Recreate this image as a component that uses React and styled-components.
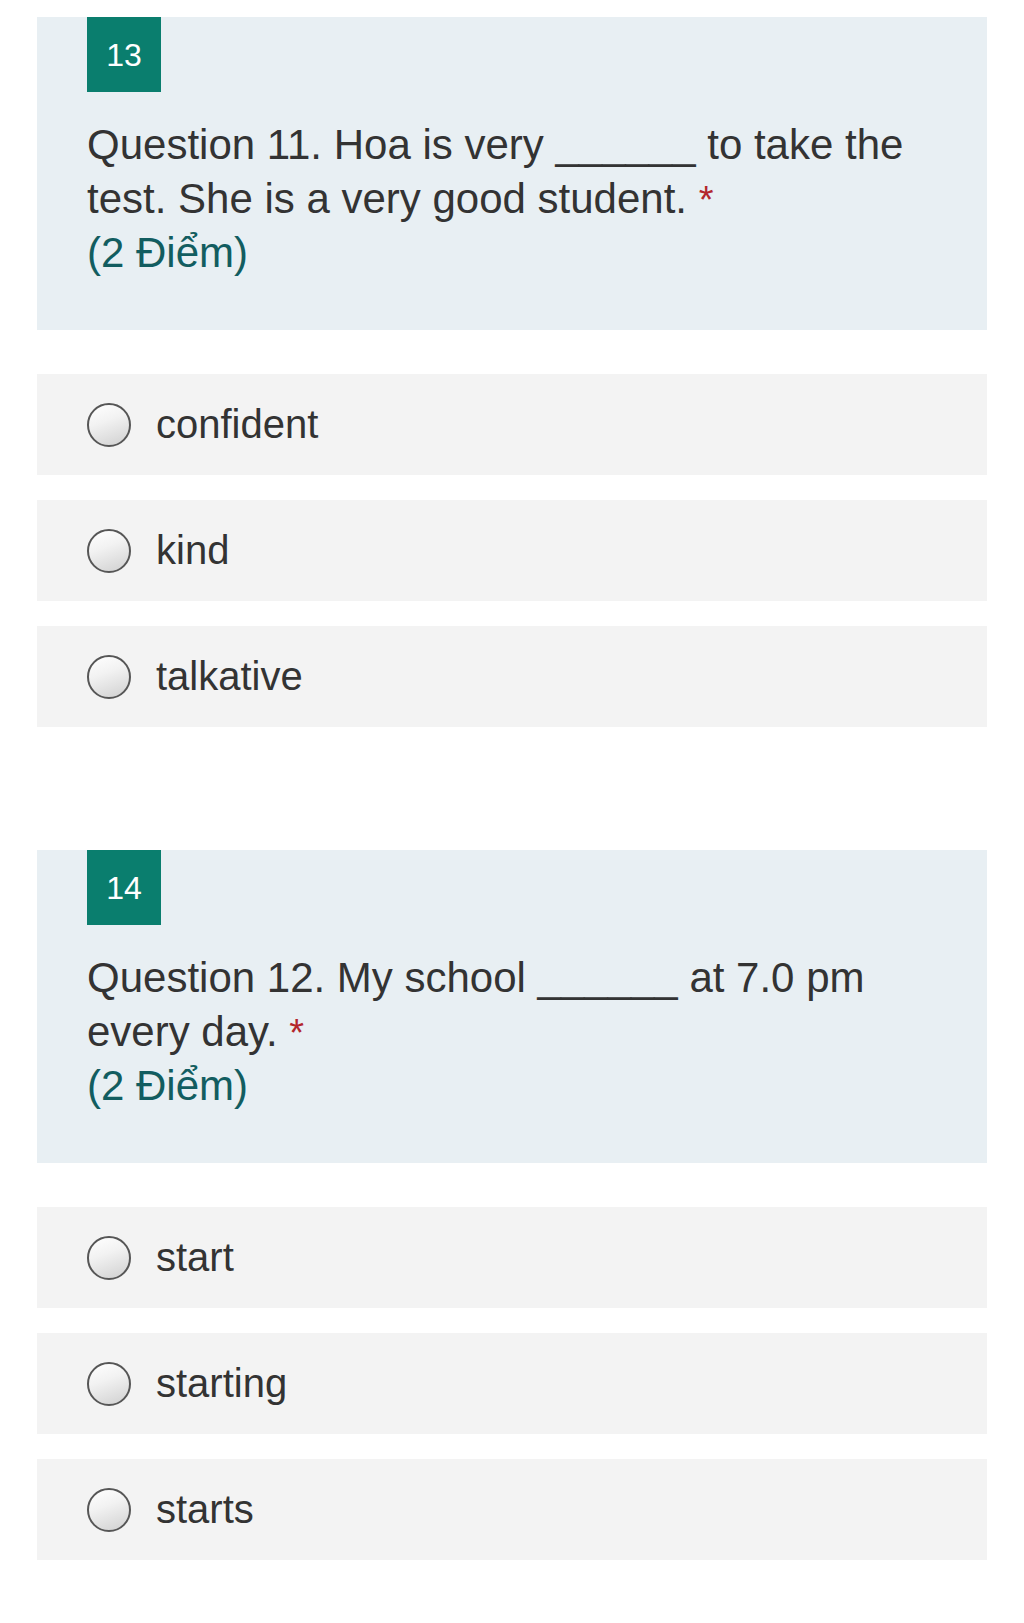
import React from "react";
import styled, { createGlobalStyle } from "styled-components";

const GlobalStyle = createGlobalStyle`
  html, body {
    margin: 0;
    padding: 0;
    background: #ffffff;
  }
  body {
    font-family: "Liberation Sans", Arial, Helvetica, sans-serif;
    color: #333333;
  }
`;

const Page = styled.main`
  width: 950px;
  padding: 17px 0 64px 37px;
  display: flex;
  flex-direction: column;
  gap: 123px;
`;

const QuestionBlock = styled.section`
  display: flex;
  flex-direction: column;
  gap: 44px;
`;

const Card = styled.div`
  background: #e8eff3;
  padding: 0 40px 50px 50px;
  display: flex;
  flex-direction: column;
  align-items: flex-start;
  gap: 26px;
`;

const Badge = styled.div`
  width: 74px;
  height: 75px;
  background: #0a7e6e;
  color: #ffffff;
  font-size: 32px;
  display: flex;
  align-items: center;
  justify-content: center;
  line-height: 1;
`;

const Title = styled.div`
  font-size: 42px;
  line-height: 54px;
  color: #333333;
`;

const Required = styled.span`
  color: #b3262c;
  font-size: 38px;
  line-height: 0;
`;

const Points = styled.div`
  color: #125d60;
`;

const Options = styled.div`
  display: flex;
  flex-direction: column;
  gap: 25px;
`;

const Option = styled.label`
  height: 101px;
  background: #f3f3f3;
  display: flex;
  align-items: center;
  padding-left: 50px;
  gap: 25px;
  font-size: 40px;
  color: #333333;
`;

const Radio = styled.span`
  width: 44px;
  height: 44px;
  box-sizing: border-box;
  border-radius: 50%;
  border: 2.5px solid #565656;
  background: linear-gradient(160deg, #ffffff 0%, #f2f2f2 40%, #d0d0d0 100%);
  flex-shrink: 0;
`;

const questions = [
  {
    num: 13,
    text: "Question 11. Hoa is very ______ to take the test. She is a very good student.",
    options: ["confident", "kind", "talkative"],
  },
  {
    num: 14,
    text: "Question 12. My school ______ at 7.0 pm every day.",
    options: ["start", "starting", "starts"],
  },
];

export default function App() {
  return (
    <>
      <GlobalStyle />
      <Page>
        {questions.map((q) => (
          <QuestionBlock key={q.num}>
            <Card>
              <Badge>{q.num}</Badge>
              <Title>
                {q.text} <Required>*</Required>
                <Points>(2 Điểm)</Points>
              </Title>
            </Card>
            <Options>
              {q.options.map((o) => (
                <Option key={o}>
                  <Radio />
                  {o}
                </Option>
              ))}
            </Options>
          </QuestionBlock>
        ))}
      </Page>
    </>
  );
}
